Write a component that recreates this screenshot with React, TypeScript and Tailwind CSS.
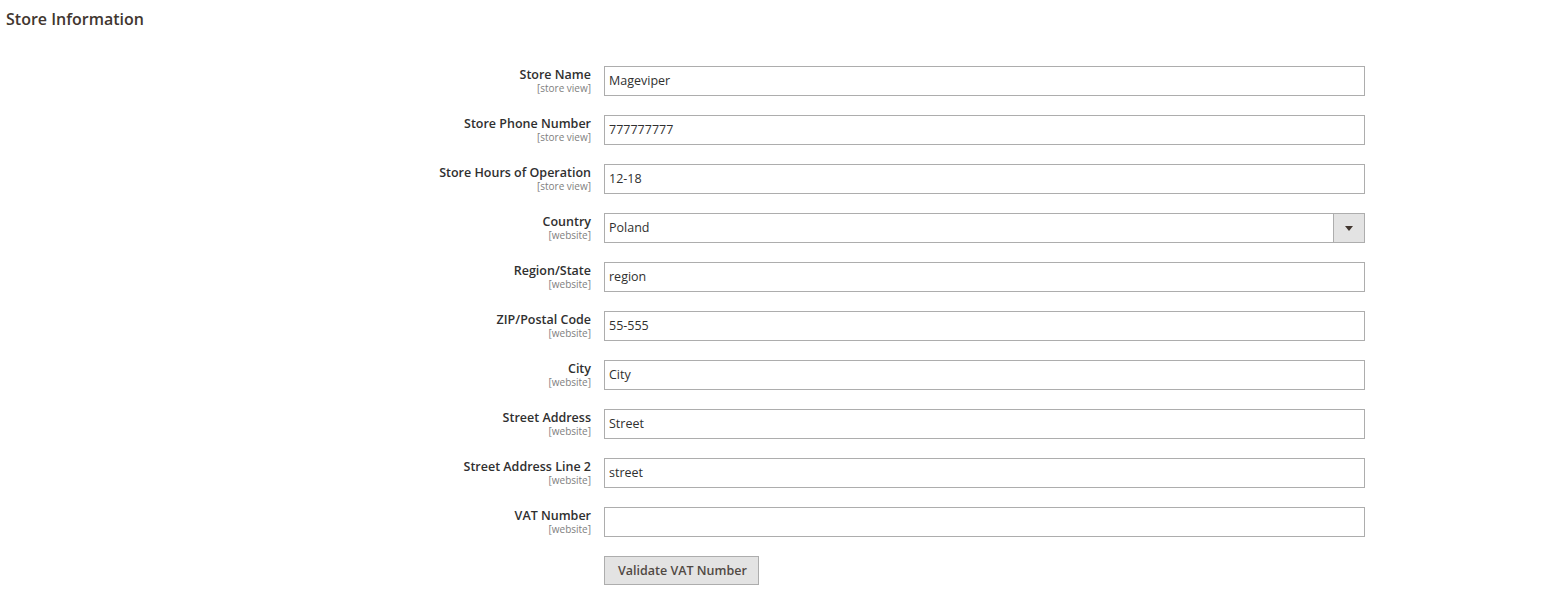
import { useState } from "react"

const rows = [
  { label: "Store Name", scope: "[store view]", value: "Mageviper" },
  { label: "Store Phone Number", scope: "[store view]", value: "777777777" },
  { label: "Store Hours of Operation", scope: "[store view]", value: "12-18" },
  { label: "Country", scope: "[website]", value: "Poland", select: true },
  { label: "Region/State", scope: "[website]", value: "region" },
  { label: "ZIP/Postal Code", scope: "[website]", value: "55-555" },
  { label: "City", scope: "[website]", value: "City" },
  { label: "Street Address", scope: "[website]", value: "Street" },
  { label: "Street Address Line 2", scope: "[website]", value: "street" },
  { label: "VAT Number", scope: "[website]", value: "" },
]

export default function App() {
  const [values, setValues] = useState<string[]>(rows.map((r) => r.value))

  return (
    <div className="w-[1565px] h-[599px] bg-white text-[#303030]" style={{ fontFamily: "'Open Sans', sans-serif" }}>
      <div className="px-[6px] pt-[9px] h-[66px]">
        <h2 className="text-[16px] leading-[20px] font-semibold text-[#41362f]">Store Information</h2>
      </div>
      <div className="flex flex-col gap-[19px]">
        {rows.map((row, i) => (
          <div key={row.label} className="flex">
            <div className="w-[591px] flex flex-col items-end pt-[1px]">
              <span className="text-[12.5px] leading-[16px] font-semibold">{row.label}</span>
              <span className="text-[10px] leading-[10px] text-[#808080]">{row.scope}</span>
            </div>
            <div className="ml-[13px] w-[761px] h-[30px] border border-[#adadad] flex">
              {row.select ? (
                <>
                  <div className="flex-1 px-[4px] text-[12.5px] leading-[28px]">{values[i]}</div>
                  <div className="w-[31px] bg-[#e3e3e3] border-l border-[#adadad] flex items-center justify-center">
                    <svg width="8" height="5" viewBox="0 0 8 5"><path d="M0 0h8L4 5z" fill="#41362f" /></svg>
                  </div>
                </>
              ) : (
                <input
                  className="flex-1 px-[4px] text-[12.5px] leading-[28px] outline-none bg-transparent text-[#303030]"
                  value={values[i]}
                  onChange={(e) => {
                    const next = [...values]
                    next[i] = e.target.value
                    setValues(next)
                  }}
                />
              )}
            </div>
          </div>
        ))}
      </div>
      <div className="pl-[604px] mt-[19px]">
        <button className="h-[29px] pl-[13px] pr-[11px] pt-[2px] bg-[#e3e3e3] border border-[#adadad] text-[12.5px] font-semibold text-[#514943]">
          Validate VAT Number
        </button>
      </div>
    </div>
  )
}
